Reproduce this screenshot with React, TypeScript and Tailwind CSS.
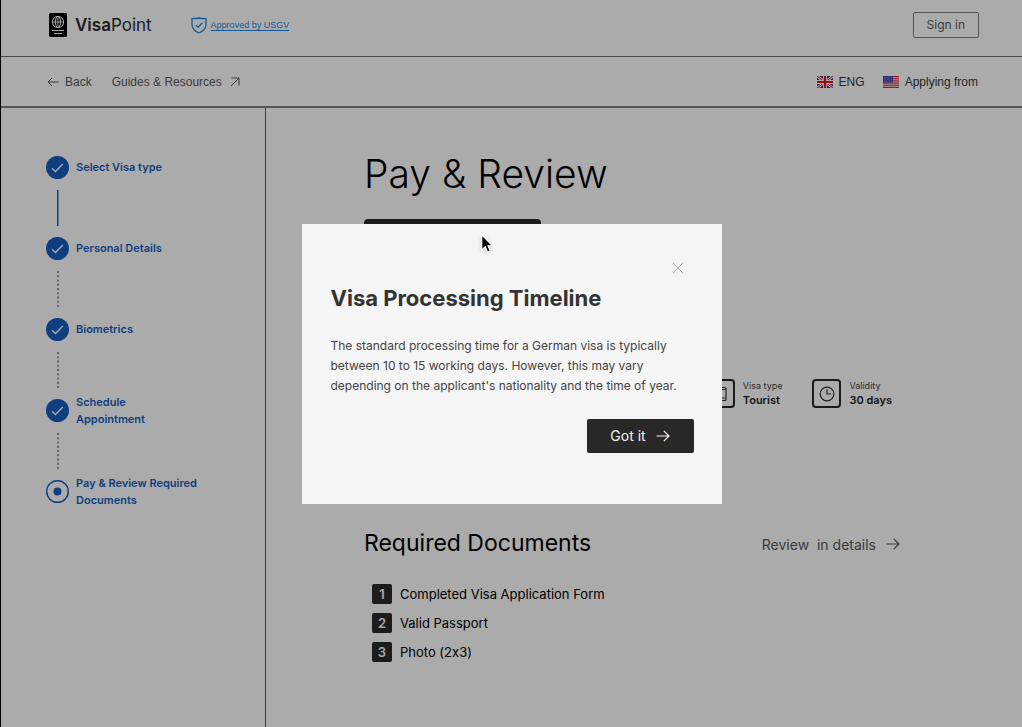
import type { ReactNode } from "react";

type IconProps = { className?: string };

function PassportIcon({ className }: IconProps) {
  return (
    <svg viewBox="0 0 18 24" className={className} aria-hidden="true">
      <rect width="18" height="24" rx="1.5" fill="#000" />
      <g fill="none" stroke="#f5f5f5" strokeWidth="1">
        <circle cx="9" cy="9" r="5.6" />
        <ellipse cx="9" cy="9" rx="2.5" ry="5.6" />
        <path d="M3.4 9h11.2M9 3.4v11.2" strokeWidth=".9" />
        <path d="M3 17.5h12M5 20.5h8" />
      </g>
    </svg>
  );
}

function ShieldIcon({ className }: IconProps) {
  return (
    <svg viewBox="0 0 16 17" className={className} fill="none" stroke="currentColor" strokeWidth="1.3" aria-hidden="true">
      <path d="M1 1.6c2.4 0 4.7 0 7-.6 2.3.6 4.6.6 7 .6v6c0 4-2.8 6.7-7 8.4-4.2-1.7-7-4.4-7-8.4z" />
      <path d="M4.8 8.2l2.2 2.2 4.4-4.7" />
    </svg>
  );
}

function ArrowRight({ className }: IconProps) {
  return (
    <svg viewBox="0 0 14 12" className={className} fill="none" stroke="currentColor" strokeWidth="1.2" aria-hidden="true">
      <path d="M.5 6H13M7.8.8L13 6l-5.2 5.2" />
    </svg>
  );
}

function ArrowLeft({ className }: IconProps) {
  return (
    <svg viewBox="0 0 12 10" className={className} fill="none" stroke="currentColor" aria-hidden="true">
      <path d="M11.5 5H1M5 1L1 5l4 4" />
    </svg>
  );
}

function ArrowUpRight({ className }: IconProps) {
  return (
    <svg viewBox="0 0 10 10" className={className} fill="none" stroke="currentColor" aria-hidden="true">
      <path d="M1 9l8-8M1.5 1H9v7.5" />
    </svg>
  );
}

function FlagUK({ className }: IconProps) {
  return (
    <svg viewBox="0 0 16 12" className={className} aria-hidden="true">
      <rect width="16" height="12" fill="#2a3f94" />
      <path d="M0 0l16 12M16 0L0 12" stroke="#f0f0f0" strokeWidth="2.6" />
      <path d="M0 0l16 12M16 0L0 12" stroke="#e01b22" strokeWidth="1" />
      <path d="M8 0v12M0 6h16" stroke="#f0f0f0" strokeWidth="4" />
      <path d="M8 0v12M0 6h16" stroke="#e00f18" strokeWidth="2.2" />
    </svg>
  );
}

function FlagUS({ className }: IconProps) {
  return (
    <svg viewBox="0 0 16 12" className={className} aria-hidden="true">
      <rect width="16" height="12" fill="#ededed" />
      <path d="M0 .5h16M0 2.3h16M0 4.2h16M0 6h16M0 7.8h16M0 9.7h16M0 11.5h16" stroke="#dc2029" strokeWidth="1" />
      <rect width="10" height="6.5" fill="#3549a8" />
      <path d="M1 1.5h8M1 3.3h8M1 5.1h8" stroke="#a9b3dc" strokeWidth=".7" strokeDasharray=".8 1" />
    </svg>
  );
}

function ClockIcon({ className }: IconProps) {
  return (
    <svg viewBox="0 0 16 16" className={className} fill="none" stroke="currentColor" strokeWidth="1.2" aria-hidden="true">
      <circle cx="8" cy="8" r="6.8" />
      <path d="M8 3.5V8h4" />
    </svg>
  );
}

function DocumentIcon({ className }: IconProps) {
  return (
    <svg viewBox="0 0 16 16" className={className} fill="none" stroke="currentColor" strokeWidth="1.2" aria-hidden="true">
      <rect x="2" y="1.5" width="12" height="13" rx="1" />
      <path d="M2 3.5h12M2 12h12" />
    </svg>
  );
}

const steps = [
  "Select Visa type",
  "Personal Details",
  "Biometrics",
  "Schedule\nAppointment",
  "Pay & Review Required\nDocuments",
];

const documents = ["Completed Visa Application Form", "Valid Passport", "Photo (2x3)"];

function StepMarker({ current }: { current: boolean }) {
  return (
    <svg viewBox="0 0 23 23" className="size-[23px] shrink-0" fill="none" aria-hidden="true">
      {current ? (
        <>
          <circle cx="11.5" cy="11.5" r="10.8" stroke="#165ab8" strokeWidth="1.4" />
          <circle cx="11.5" cy="11.5" r="4" fill="#165ab8" />
        </>
      ) : (
        <>
          <circle cx="11.5" cy="11.5" r="11.5" fill="#165ab8" />
          <path d="M6 12.2l3.5 3.3L16.8 8" stroke="#f5f5f5" strokeWidth="1.3" />
        </>
      )}
    </svg>
  );
}

function Connector({ solid }: { solid: boolean }) {
  return (
    <svg viewBox="0 0 2 36" className="my-[11px] ml-[11px] h-9 w-0.5" aria-hidden="true">
      {solid ? (
        <path d="M.75 0v36" stroke="#165ab8" strokeWidth="1.5" />
      ) : (
        <path d="M1 0v36" stroke="#8d95a3" strokeWidth="2" strokeDasharray="2 2.25" />
      )}
    </svg>
  );
}

function Fact({ icon, label, value }: { icon: ReactNode; label: string; value: string }) {
  return (
    <div className="flex items-center gap-2">
      <span className="flex size-[29px] items-center justify-center rounded border-2 border-[#262626] text-[#333]">
        {icon}
      </span>
      <dl>
        <dt className="text-[9px] leading-3 text-[#444]">{label}</dt>
        <dd className="text-[11px] leading-4 font-semibold text-[#222]">{value}</dd>
      </dl>
    </div>
  );
}

export default function App() {
  return (
    <div className="relative flex min-h-screen flex-col border-l border-black bg-[#f5f5f5] font-['Inter',sans-serif] text-black [font-feature-settings:'calt'_0]">
      <header className="flex h-[57px] items-center border-b border-[#6b6b6b] pr-[43px] pb-1.5 pl-12">
        <a href="#home" className="flex items-center gap-2 text-[17px] leading-6 text-[#2b2b2b]">
          <PassportIcon className="h-6 w-[18px]" />
          <span><b className="font-semibold">Visa</b>Point</span>
        </a>
        <a href="#approval" className="ml-[39px] flex items-center gap-1 font-['Liberation_Sans',sans-serif] text-[9px] leading-[10px] text-[#1c7fe0]">
          <ShieldIcon className="h-[17px] w-4" />
          <span className="border-b border-current">Approved by USGV</span>
        </a>
        <button className="ml-auto h-[26px] rounded-xs border border-[#777] px-[13px] text-[12px] text-[#555]">Sign in</button>
      </header>

      <nav className="flex h-[51px] items-center border-b-2 border-[#7a7a7a] pr-11 pl-[46px] font-['Liberation_Sans',sans-serif] text-[12px] leading-4 text-[#555]">
        <a href="#back" className="flex items-center gap-1.5">
          <ArrowLeft className="h-2.5 w-3" />
          Back
        </a>
        <a href="#guides" className="ml-5 flex items-center gap-2">
          Guides &amp; Resources
          <ArrowUpRight className="size-2.5" />
        </a>
        <div className="ml-auto flex items-center gap-[18px] text-[#333]">
          <button className="flex items-center gap-1.5">
            <FlagUK className="h-3 w-4" />
            ENG
          </button>
          <button className="flex items-center gap-1.5">
            <FlagUS className="h-3 w-4" />
            Applying from
          </button>
        </div>
      </nav>

      <div className="flex grow">
        <aside className="w-[265px] shrink-0 border-r border-[#555] pt-12 pl-[45px]">
          <ol>
            {steps.map((step, i) => (
              <li key={step}>
                <div className="flex h-[23px] items-center gap-[7px]">
                  <StepMarker current={i === steps.length - 1} />
                  <span className="text-[11px] leading-[17px] font-semibold whitespace-pre-line text-[#165ab8]">{step}</span>
                </div>
                {i < steps.length - 1 && <Connector solid={i === 0} />}
              </li>
            ))}
          </ol>
        </aside>

        <main className="grow pt-10 pr-[122px] pl-[98px]">
          <h1 className="text-[39px] leading-[52px] font-light">Pay &amp; Review</h1>
          <div className="mt-[19px] h-10 w-[177px] rounded bg-[#292929]" />
          <div className="mt-[120px] flex justify-end gap-[30px] pr-2">
            <Fact icon={<DocumentIcon className="size-4" />} label="Visa type" value="Tourist" />
            <Fact icon={<ClockIcon className="size-4" />} label="Validity" value="30 days" />
          </div>
          <section className="mt-[119px]">
            <div className="flex items-center justify-between">
              <h2 className="text-[23px] leading-8">Required Documents</h2>
              <a href="#details" className="flex items-center gap-2.5 pt-0.5 text-[14px] whitespace-pre text-[#555]">
                {"Review  in details"}
                <ArrowRight className="h-3 w-3.5" />
              </a>
            </div>
            <ol className="mt-[25px] flex flex-col gap-[9px] pl-2">
              {documents.map((name, i) => (
                <li key={name} className="flex items-center gap-2 text-[13px] leading-5">
                  <span className="flex size-5 items-center justify-center rounded-xs bg-[#292929] font-semibold text-[#eee]">
                    {i + 1}
                  </span>
                  {name}
                </li>
              ))}
            </ol>
          </section>
        </main>
      </div>

      <div className="absolute inset-0 flex items-center justify-center bg-black/30">
        <div role="dialog" aria-modal="true" aria-labelledby="dialog-title" className="flex w-[420px] flex-col bg-[#f5f5f5] pt-[38px] pr-7 pb-[51px] pl-[29px]">
          <button aria-label="Close" className="mr-2.5 self-end text-[#aaa]">
            <svg viewBox="0 0 12 12" className="size-3" fill="none" stroke="currentColor" aria-hidden="true">
              <path d="M.7.7l10.6 10.6M11.3.7L.7 11.3" />
            </svg>
          </button>
          <h2 id="dialog-title" className="mt-2 text-[22px] leading-8 font-bold text-[#333]">Visa Processing Timeline</h2>
          <p className="mt-[22px] text-[12px] leading-5 text-[#444]">
            The standard processing time for a German visa is typically between 10 to 15 working days. However, this may
            vary depending on the applicant's nationality and the time of year.
          </p>
          <button className="mt-[23px] flex h-[34px] w-[107px] items-center justify-center gap-2.5 self-end rounded-xs bg-[#292827] text-[14px] text-[#f5f5f5]">
            Got it
            <ArrowRight className="h-3 w-3.5" />
          </button>
        </div>
      </div>

      <svg viewBox="0 0 12 18" className="pointer-events-none absolute top-[233px] left-[479px] h-[21px] w-3.5 drop-shadow-sm" aria-hidden="true">
        <path d="M1.5 1.5v13l3-2.7 2 4.7 2.3-1-2-4.5h4z" fill="#000" stroke="#fff" strokeWidth="1" />
      </svg>
    </div>
  );
}
